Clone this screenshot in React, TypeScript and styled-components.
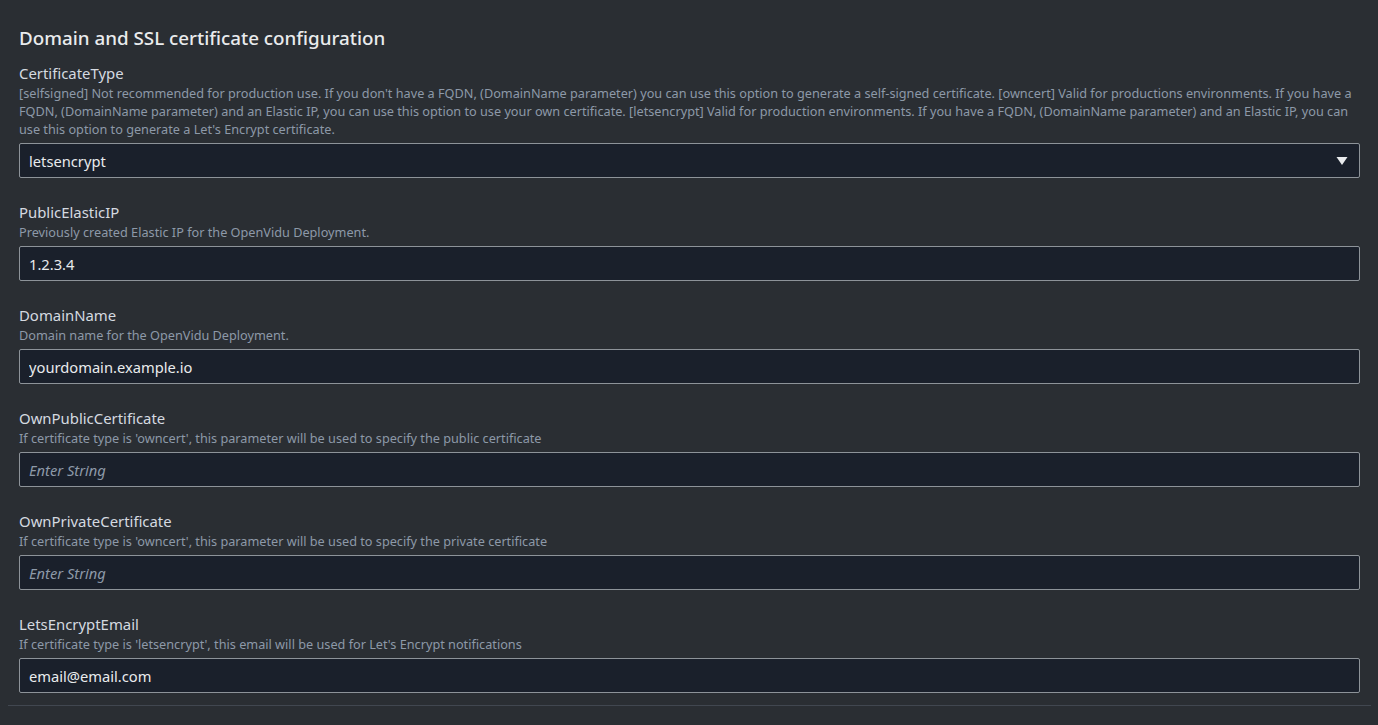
import React from "react";
import styled, { createGlobalStyle } from "styled-components";

const GlobalStyle = createGlobalStyle`
  html, body {
    margin: 0;
    padding: 0;
    background: #2a2e33;
  }
  body {
    font-family: "Noto Sans", "Open Sans", sans-serif;
    -webkit-font-smoothing: antialiased;
  }
`;

const Page = styled.div`
  background: #2a2e33;
  min-height: 725px;
  padding: 0 7px 0 8px;
  box-sizing: border-box;
`;

const Section = styled.section`
  padding: 26px 11px 12px;
  border-bottom: 1px solid #414750;
  display: flex;
  flex-direction: column;
  gap: 24px;
`;

const Title = styled.h2`
  margin: 0 0 -11px;
  font-size: 18.8px;
  line-height: 24px;
  font-weight: 500;
  color: #e9ebed;
`;

const Field = styled.div`
  display: flex;
  flex-direction: column;
`;

const Label = styled.label`
  font-size: 14.9px;
  line-height: 21px;
  color: #d5dae0;
`;

const Description = styled.div`
  font-size: 12.7px;
  line-height: 18px;
  color: #8d99a8;
  margin-bottom: 5px;
`;

const Box = styled.div`
  position: relative;
  height: 35px;
  box-sizing: border-box;
  border: 1px solid #8d9399;
  border-radius: 2px;
  background: #1a202b;
  display: flex;
  align-items: center;
`;

const TextInput = styled.input`
  flex: 1;
  height: 100%;
  border: none;
  outline: none;
  background: transparent;
  padding: 0 10px 0 9px;
  font-family: "Noto Sans", "Open Sans", sans-serif;
  font-size: 14.7px;
  color: #e9ebed;

  &::placeholder {
    color: #8d99a8;
    font-style: italic;
  }
`;

const SelectValue = styled.span`
  flex: 1;
  padding-left: 9px;
  font-size: 14.7px;
  color: #e9ebed;
`;

const Caret = styled.svg`
  width: 12px;
  height: 10px;
  margin-right: 11px;
`;

type FieldDef = {
  label: string;
  description: string;
  value?: string;
  select?: boolean;
};

const fields: FieldDef[] = [
  {
    label: "CertificateType",
    description:
      "[selfsigned] Not recommended for production use. If you don't have a FQDN, (DomainName parameter) you can use this option to generate a self-signed certificate. [owncert] Valid for productions environments. If you have a FQDN, (DomainName parameter) and an Elastic IP, you can use this option to use your own certificate. [letsencrypt] Valid for production environments. If you have a FQDN, (DomainName parameter) and an Elastic IP, you can use this option to generate a Let's Encrypt certificate.",
    value: "letsencrypt",
    select: true,
  },
  {
    label: "PublicElasticIP",
    description: "Previously created Elastic IP for the OpenVidu Deployment.",
    value: "1.2.3.4",
  },
  {
    label: "DomainName",
    description: "Domain name for the OpenVidu Deployment.",
    value: "yourdomain.example.io",
  },
  {
    label: "OwnPublicCertificate",
    description:
      "If certificate type is 'owncert', this parameter will be used to specify the public certificate",
  },
  {
    label: "OwnPrivateCertificate",
    description:
      "If certificate type is 'owncert', this parameter will be used to specify the private certificate",
  },
  {
    label: "LetsEncryptEmail",
    description:
      "If certificate type is 'letsencrypt', this email will be used for Let's Encrypt notifications",
    value: "email@email.com",
  },
];

export default function App() {
  return (
    <>
      <GlobalStyle />
      <Page>
        <Section>
          <Title>Domain and SSL certificate configuration</Title>
          {fields.map((f) => (
            <Field key={f.label}>
              <Label>{f.label}</Label>
              <Description>{f.description}</Description>
              <Box>
                {f.select ? (
                  <>
                    <SelectValue>{f.value}</SelectValue>
                    <Caret viewBox="0 0 12 10">
                      <path d="M0.5 1 L11.5 1 L6 9 Z" fill="#e9ebed" />
                    </Caret>
                  </>
                ) : (
                  <TextInput
                    defaultValue={f.value}
                    placeholder="Enter String"
                  />
                )}
              </Box>
            </Field>
          ))}
        </Section>
      </Page>
    </>
  );
}
